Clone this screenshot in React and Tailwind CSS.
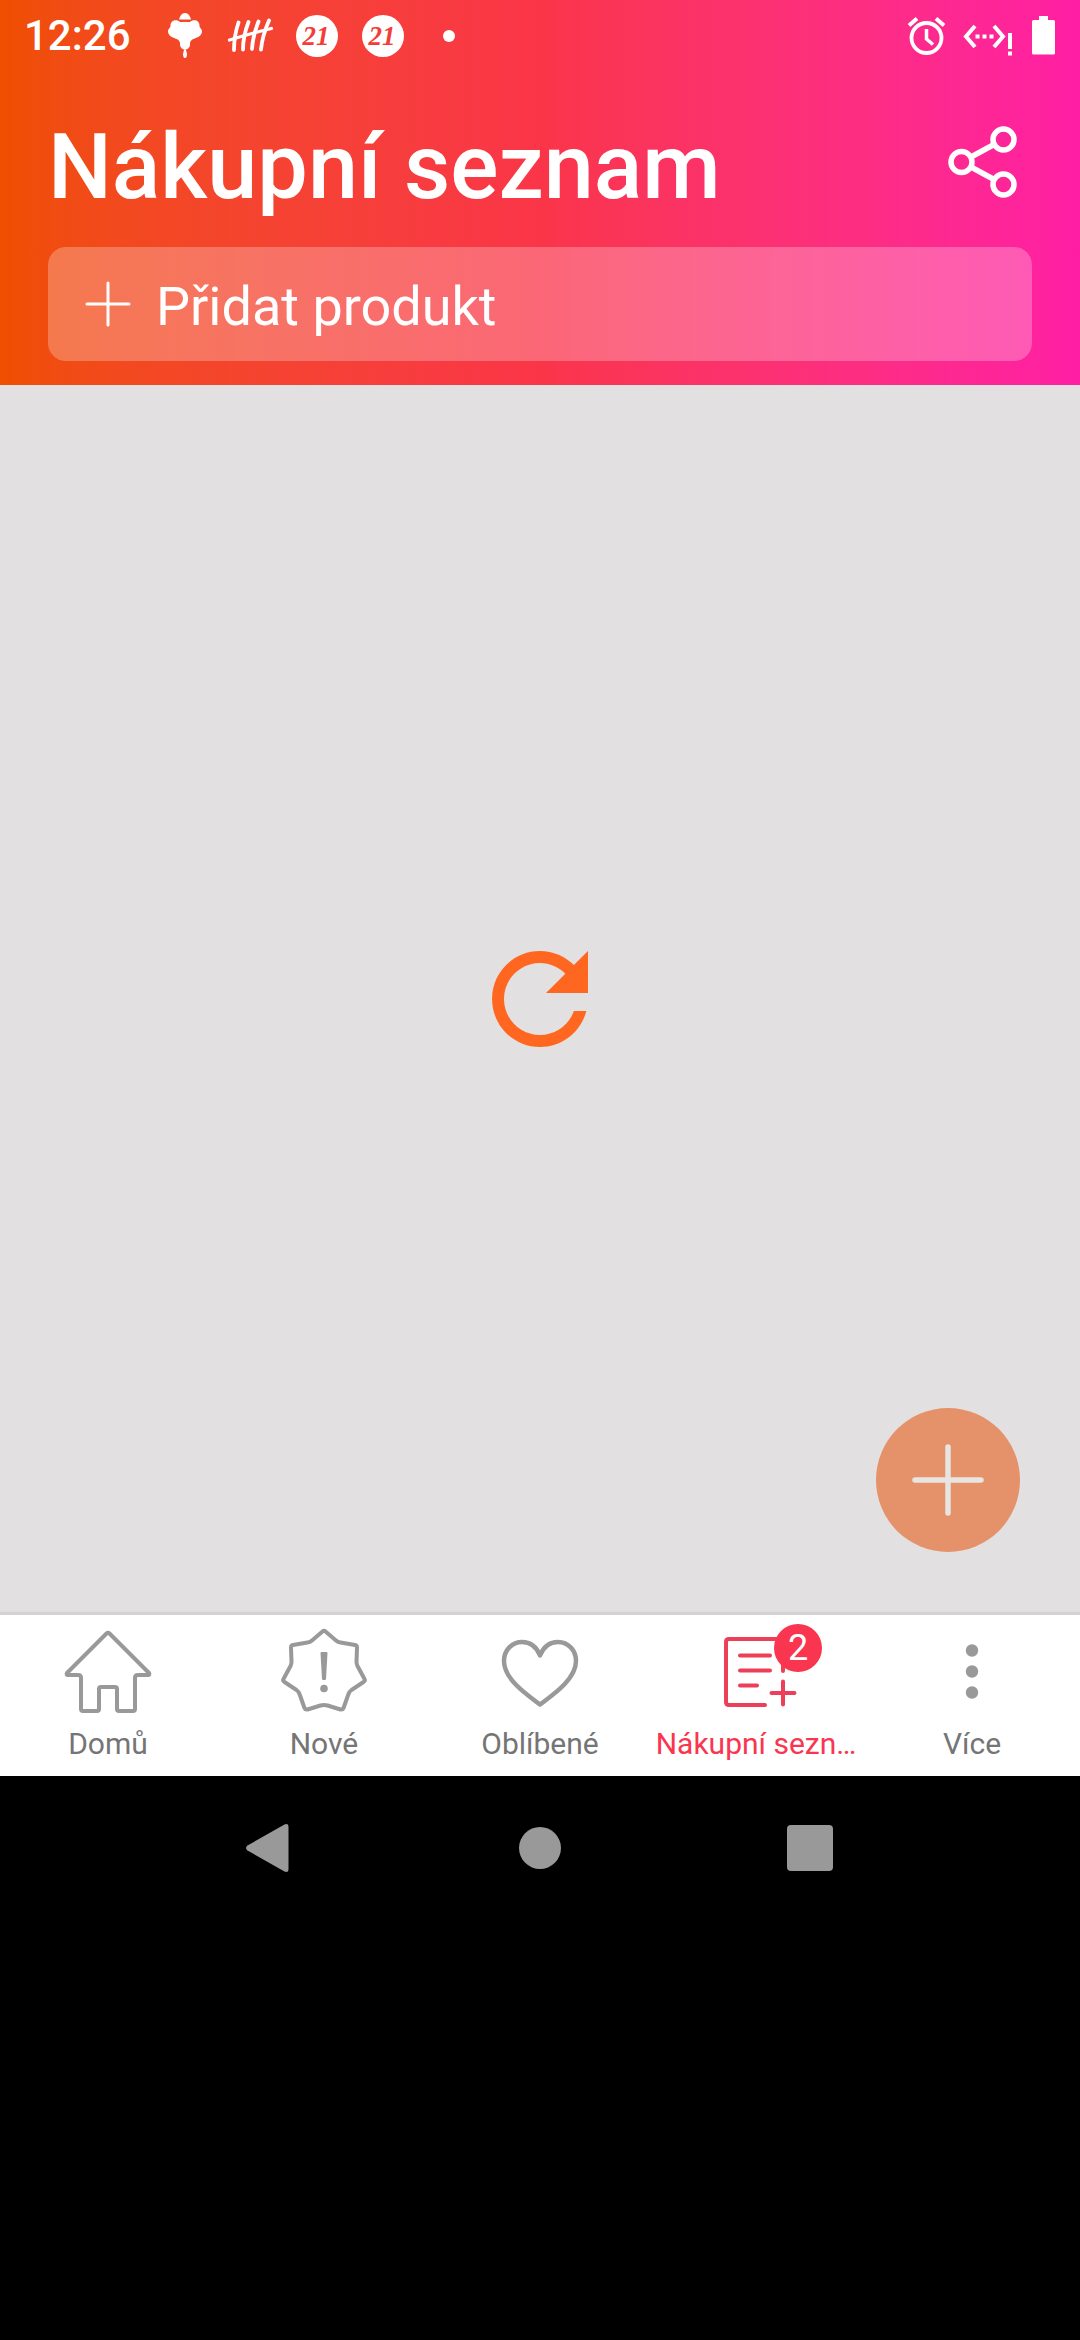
import React from "react";

function LanternIcon() {
  return (
    <svg viewBox="161 10 48 52" className="h-[52px] w-12" fill="#fff" aria-hidden="true">
      <path d="M179 19.500C180 16 181.500 13 185 13S190 16 191 19.500z" />
      <path d="M180 22C177 18.500 170 20 170.500 26C170.500 28 168 28.500 168 31.500C168 36 173 37.500 176.500 39C179 40 180 41.500 180 43.500C179.500 46 181 48.500 183.500 49.500H186.500C189 48.500 190.500 46 190 43.500C190 41.500 191 40 193.500 39C197 37.500 202 36 202 31.500C202 28.500 199.500 28 199.500 26C200 20 193 18.500 190 22z" />
      <path d="M185 48.500C186.500 51 187 53 187 54.500C187 57 186 58 185 58S183 57 183 54.500C183 53 183.500 51 185 48.500z" />
    </svg>
  );
}

function TallyIcon() {
  return (
    <svg viewBox="227 10 48 52" className="h-[52px] w-12" fill="none" stroke="#fff" strokeWidth="3.800" strokeLinecap="round" strokeLinejoin="round" aria-hidden="true">
      <path d="M238.500 22.500c-3 9-4.500 18-4.500 27.500M248.500 22c-3.500 9-5.500 18-5.500 27.500M258.500 21.500c-3.500 9-6 18-6.500 27.500M269 20.500c-4 9-7 19-8 29" />
      <path d="M229.500 40c13-4 27-8 42-11.500" strokeWidth="3.200" />
    </svg>
  );
}

function NumberBadge() {
  return (
    <span className="flex w-12 justify-center">
      <span className="flex size-[42px] items-center justify-center rounded-full bg-white pr-0.5 font-['Liberation_Serif',serif] text-[27px] leading-7 font-bold text-[#f43c38] italic">21</span>
    </span>
  );
}

function AlarmIcon() {
  return (
    <svg viewBox="902 10 48 52" className="h-[52px] w-12" fill="none" stroke="#fff" aria-hidden="true">
      <circle cx="926.500" cy="38" r="15" strokeWidth="3.800" />
      <path d="M926.500 29v10l6.500 5.500" strokeWidth="3.500" />
      <path d="M909 25.500l8-7M944 25.500l-8-7" strokeWidth="4" />
    </svg>
  );
}

function EthernetIcon() {
  return (
    <svg viewBox="962 10 52 52" className="h-[52px] w-[52px]" fill="none" stroke="#fff" strokeWidth="4" aria-hidden="true">
      <path d="M975 26l-9 10.500 9 10.500M994 26l9 10.500-9 10.500" />
      <path d="M975.500 36.500h4M982.500 36.500h4M989.500 36.500h4M1010 33v16M1010 51.500v4" />
    </svg>
  );
}

function BatteryIcon() {
  return (
    <svg viewBox="1033 10 24 52" className="h-[52px] w-6" fill="#fff" aria-hidden="true">
      <path d="M1040 16h9v4h5.500q1.500 0 1.500 1.500v31.500q0 1.500-1.500 1.500h-20q-1.500 0-1.500-1.500v-31.500q0-1.500 1.500-1.500h5.500z" />
    </svg>
  );
}

function StatusBar() {
  return (
    <div className="flex h-[72px] items-center justify-between px-6">
      <div className="flex items-center">
        <span className="w-[137px] text-[42px] leading-[52px] font-medium">12:26</span>
        <div className="flex items-center gap-[18px]">
          <LanternIcon />
          <TallyIcon />
          <NumberBadge />
          <NumberBadge />
          <span className="flex w-12 justify-center">
            <span className="size-3 rounded-full bg-white" />
          </span>
        </div>
      </div>
      <div className="flex items-center">
        <AlarmIcon />
        <span className="w-3" />
        <EthernetIcon />
        <span className="w-[18px]" />
        <BatteryIcon />
      </div>
    </div>
  );
}

function Header() {
  return (
    <header className="bg-linear-to-r from-[#f04e00] via-[#fa3548] via-50% to-[#ff1ea4] text-white">
      <StatusBar />
      <div className="px-12 pt-10 pb-6">
        <div className="flex items-start justify-between">
          <h1 className="text-[90px] leading-[112px] font-medium">Nákupní seznam</h1>
          <button type="button" aria-label="Sdílet" className="flex size-[100px] items-center justify-center">
            <svg viewBox="932 112 100 100" className="size-[100px]" fill="none" stroke="#fff" strokeWidth="5.500" aria-hidden="true">
              <circle cx="961.500" cy="162" r="10.500" />
              <circle cx="1003.500" cy="139.500" r="10.500" />
              <circle cx="1003.500" cy="184.500" r="10.500" />
              <path d="M971 157l23-12.500M971 167l23 12.500" />
            </svg>
          </button>
        </div>
        <label className="mt-[23px] flex h-[114px] items-center rounded-[18px] bg-white/25 pl-9">
          <svg viewBox="0 0 48 48" className="size-12 shrink-0" fill="none" stroke="#fff" strokeWidth="3" strokeLinecap="round" aria-hidden="true">
            <path d="M3 24h42M24 3v42" />
          </svg>
          <input
            type="text"
            aria-label="Přidat produkt"
            placeholder="Přidat produkt"
            className="ml-6 h-full min-w-0 flex-1 bg-transparent pt-1 text-[54px] leading-[64px] outline-none placeholder:text-white"
          />
        </label>
      </div>
    </header>
  );
}

function HomeIcon() {
  return (
    <svg viewBox="58 1620 100 96" className="h-24 w-[100px]" fill="none" stroke="#999" strokeWidth="4" strokeLinecap="round" strokeLinejoin="round" aria-hidden="true">
      <path d="M106.500 1633.500q1.500-1.500 3 0l39.500 39.500q1 2-1 2h-10q-3 0-3 3v31q0 2-2 2h-14q-2 0-2-2v-20q0-2-2-2h-14q-2 0-2 2v20q0 2-2 2h-14q-2 0-2-2v-31q0-3-3-3h-10q-2 0-1-2z" />
    </svg>
  );
}

function NewIcon() {
  return (
    <svg viewBox="274 1620 100 96" className="h-24 w-[100px]" aria-hidden="true">
      <path d="M322.500 1631.500q1.500-1.500 3 0l10.500 9q2 1.800 4.500 2l14.500 2.500q2 .5 2 2.500l-.5 14.500q0 2 1 4l7 13q1 2-1 3l-12 8q-2 1.500-3 4l-5 14q-1 2-3 1.500l-13-4q-3.500-1-7 0l-13 4q-2 .5-3-1.500l-5-14q-1-2.500-3-4l-12-8q-2-1-1-3l7-13q1-2 1-4l-.5-14.500q0-2 2-2.500l14.500-2.500q2.500-.2 4.500-2z" fill="none" stroke="#999" strokeWidth="4" strokeLinejoin="round" />
      <path d="M320.500 1653q0-1 1-1h5q1 0 1 1l-1.500 26q-.2 1-1 1h-2q-.8 0-1-1z" fill="#999" />
      <circle cx="324" cy="1688.500" r="3.800" fill="#999" />
    </svg>
  );
}

function HeartIcon() {
  return (
    <svg viewBox="490 1620 100 96" className="h-24 w-[100px]" fill="none" stroke="#999" strokeWidth="4.500" strokeLinecap="round" strokeLinejoin="round" aria-hidden="true">
      <path d="M540 1704.500C529 1696 504 1680 504 1661C504 1650 512 1642 522 1642C531 1642 537 1648 540 1655.500C543 1648 549 1642 558 1642C568 1642 576 1650 576 1661C576 1680 551 1696 540 1704.500z" />
    </svg>
  );
}

function ListIcon() {
  return (
    <span className="relative">
      <svg viewBox="706 1620 100 96" className="h-24 w-[100px]" fill="none" stroke="#ee3f59" strokeWidth="4" strokeLinecap="round" strokeLinejoin="round" aria-hidden="true">
        <path d="M765 1705h-36q-3 0-3-3v-60q0-3 3-3h51q3 0 3 3v29" />
        <path d="M740 1655.500h30M740 1670.500h30M740 1685.500h17M771.500 1693h23M783 1681.500v23" />
      </svg>
      <span className="absolute top-1 -right-4 flex size-12 items-center justify-center rounded-full bg-[#fa3550] text-[36px] leading-[48px] text-white">2</span>
    </span>
  );
}

function MoreIcon() {
  return (
    <svg viewBox="922 1620 100 96" className="h-24 w-[100px]" fill="#999" aria-hidden="true">
      <circle cx="972" cy="1650.500" r="6.200" />
      <circle cx="972" cy="1671.500" r="6.200" />
      <circle cx="972" cy="1692.500" r="6.200" />
    </svg>
  );
}

const tabs = [
  { label: "Domů", Icon: HomeIcon },
  { label: "Nové", Icon: NewIcon },
  { label: "Oblíbené", Icon: HeartIcon },
  { label: "Nákupní sezn…", Icon: ListIcon, active: true },
  { label: "Více", Icon: MoreIcon },
];

function TabBar() {
  return (
    <nav className="grid grid-cols-5 border-t-[3px] border-[#d5d2d4] bg-white">
      {tabs.map(({ label, Icon, active }) => (
        <a
          key={label}
          href="#"
          aria-current={active ? "page" : undefined}
          className={"flex flex-col items-center gap-2 pt-[5px] pb-3 " + (active ? "text-[#fa3550]" : "text-[#757575]")}
        >
          <Icon />
          <span className="text-[30px] leading-10 whitespace-nowrap">{label}</span>
        </a>
      ))}
    </nav>
  );
}

function SystemBar() {
  return (
    <div className="grid h-36 grid-cols-3 px-[12.5%]">
      <button type="button" aria-label="Zpět" className="flex items-center justify-center">
        <svg viewBox="240 1818 60 60" className="size-[60px]" fill="#999" aria-hidden="true">
          <path d="M247.500 1845.500L284.500 1824.500Q288.500 1823 288.500 1827V1869Q288.500 1873 284.500 1871.500L247.500 1850.500Q244.500 1848 247.500 1845.500z" />
        </svg>
      </button>
      <button type="button" aria-label="Domů" className="flex items-center justify-center">
        <span className="size-[42px] rounded-full bg-[#999]" />
      </button>
      <button type="button" aria-label="Přehled" className="flex items-center justify-center">
        <span className="size-[46px] rounded bg-[#999]" />
      </button>
    </div>
  );
}

export default function App() {
  return (
    <div className="flex min-h-screen flex-col bg-black pb-[420px] font-['Roboto',sans-serif]">
      <Header />
      <main className="relative flex flex-1 items-center justify-center bg-[#e2e0e1]">
        <button type="button" aria-label="Obnovit">
          <svg viewBox="0 0 24 24" className="size-36" fill="#ff6720" aria-hidden="true">
            <path d="M17.65 6.350C16.200 4.900 14.210 4 12 4c-4.420 0-7.990 3.580-7.990 8s3.570 8 7.990 8c3.730 0 6.840-2.550 7.730-6h-2.080c-.82 2.330-3.040 4-5.650 4-3.310 0-6-2.690-6-6s2.690-6 6-6c1.660 0 3.140.69 4.220 1.780L13 11h7V4z" />
          </svg>
        </button>
        <button type="button" aria-label="Přidat" className="absolute right-[60px] bottom-[60px] flex size-36 items-center justify-center rounded-full bg-[#e5926a]">
          <svg viewBox="0 0 80 80" className="size-20" fill="none" stroke="#e8e4e1" strokeWidth="5.500" strokeLinecap="round" aria-hidden="true">
            <path d="M7 40h66M40 7v66" />
          </svg>
        </button>
      </main>
      <TabBar />
      <SystemBar />
    </div>
  );
}
